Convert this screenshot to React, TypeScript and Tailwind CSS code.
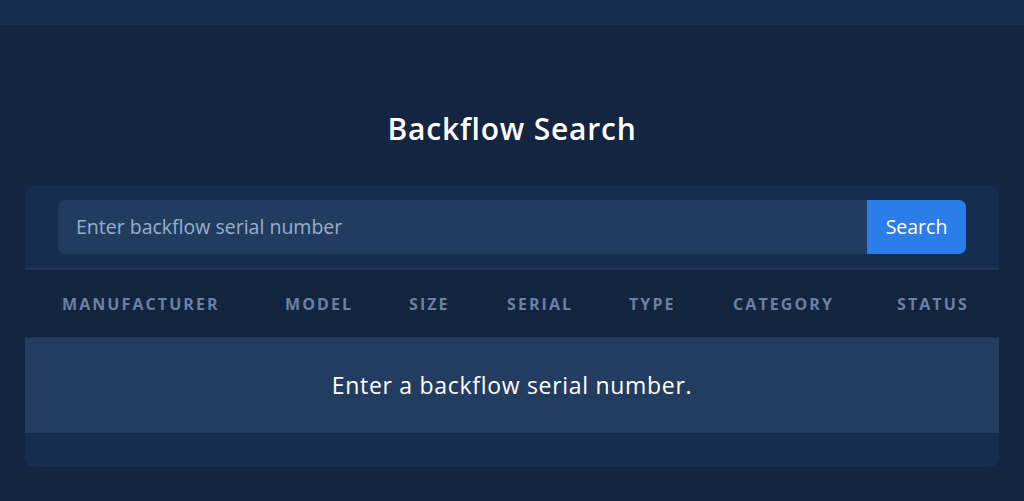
export default function App() {
  const cols = ["MANUFACTURER", "MODEL", "SIZE", "SERIAL", "TYPE", "CATEGORY", "STATUS"];
  return (
    <div
      className="w-[1024px] h-[501px] bg-[#132540] overflow-hidden flex flex-col"
      style={{ fontFamily: "'Open Sans', Lato, sans-serif" }}
    >
      <div className="h-[25px] bg-[#152d4f] shrink-0" />
      <div className="flex flex-col items-center pt-[85px]">
        <h1 className="text-[30px] leading-[38px] font-semibold text-white tracking-[0.8px]">Backflow Search</h1>
      </div>
      <div className="mx-[25px] mt-[38px] rounded-[9px] bg-[#162d50] overflow-hidden">
        <div className="px-[33px] pt-[14px] pb-[14px] flex">
          <div className="flex-1 h-[54px] bg-[#213c5f] rounded-l-[7px] flex items-center pl-[18px] text-[19.5px] text-[#9aaecb]">
            Enter backflow serial number
          </div>
          <div className="w-[99px] h-[54px] bg-[#2b7de9] rounded-r-[7px] flex items-center justify-center text-[19.5px] text-white">
            Search
          </div>
        </div>
        <div className="h-[2px] bg-[#1d3659]" />
        <div className="h-[67px] bg-[#13243f] grid grid-cols-[223px_124px_98px_122px_104px_164px_1fr] items-center pl-[37px] text-[16px] font-bold tracking-[0.13em] text-[#6c80a2]">
          {cols.map((c) => (
            <div key={c}>{c}</div>
          ))}
        </div>
        <div className="h-[1px] bg-[#1d3659]" />
        <div className="h-[95px] bg-[#223d5f] flex items-center justify-center text-[23px] tracking-[0.7px] text-white">
          Enter a backflow serial number.
        </div>
        <div className="h-[34px] bg-[#162d50]" />
      </div>
    </div>
  );
}
